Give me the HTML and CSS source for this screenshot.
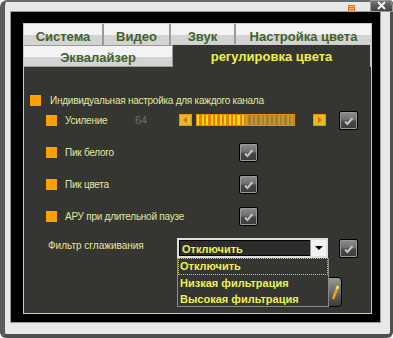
FILE: index.html
```html
<!DOCTYPE html>
<html lang="ru">
<head>
<meta charset="utf-8">
<title>регулировка цвета</title>
<link rel="stylesheet" href="styles.css">
</head>
<body>
<div class="window">
  <div class="titlebar">
    <span class="menu-icon"><svg width="7" height="7" viewBox="0 0 7 7"><rect width="7" height="7" fill="#f07010"/><rect x="1" y="1" width="5" height="1" fill="#ffc060"/><rect x="1" y="3" width="5" height="1" fill="#ffc060"/><rect x="1" y="5" width="5" height="1" fill="#ffc060"/></svg></span>
    <span class="close-btn"><svg width="23" height="12" viewBox="0 0 23 12"><path d="M8 2 L15 9 M15 2 L8 9" stroke="#f4f4f4" stroke-width="2" fill="none"/></svg></span>
  </div>
  <div class="screen">
    <div class="panel">
      <div class="tabs1">
        <div class="tab t1">Система</div>
        <div class="tab t2">Видео</div>
        <div class="tab t3">Звук</div>
        <div class="tab t4">Настройка цвета</div>
      </div>
      <div class="tabs2">
        <div class="tab eq">Эквалайзер</div>
        <div class="tab active">регулировка цвета</div>
      </div>
      <div class="content">
        <div class="row-a"><span class="sq"></span><span class="lbl">Индивидуальная настройка для каждого канала</span></div>
        <div class="row first">
          <span class="sq ind"></span><span class="lbl w70">Усиление</span><span class="val">64</span>
          <span class="arr"><svg width="11" height="10" viewBox="0 0 11 10"><path d="M3 5 L7 1.5 L7 8.5 Z" fill="#e8680c"/></svg></span>
          <span class="bar"><span class="fill"></span><span class="rest"></span></span>
          <span class="arr arr-r"><svg width="11" height="10" viewBox="0 0 11 10"><path d="M8 5 L4 1.5 L4 8.5 Z" fill="#e8680c"/></svg></span>
          <span class="chk ml13"><svg width="17" height="17" viewBox="0 0 17 17"><path d="M5 9.5 L7.5 12 L12.5 6" stroke="#c4c4c4" stroke-width="2" fill="none"/></svg></span>
        </div>
        <div class="row">
          <span class="sq ind"></span><span class="lbl w174">Пик белого</span>
          <span class="chk"><svg width="17" height="17" viewBox="0 0 17 17"><path d="M5 9.5 L7.5 12 L12.5 6" stroke="#c4c4c4" stroke-width="2" fill="none"/></svg></span>
        </div>
        <div class="row">
          <span class="sq ind"></span><span class="lbl w174">Пик цвета</span>
          <span class="chk"><svg width="17" height="17" viewBox="0 0 17 17"><path d="M5 9.5 L7.5 12 L12.5 6" stroke="#c4c4c4" stroke-width="2" fill="none"/></svg></span>
        </div>
        <div class="row">
          <span class="sq ind"></span><span class="lbl w174">АРУ при длительной паузе</span>
          <span class="chk"><svg width="17" height="17" viewBox="0 0 17 17"><path d="M5 9.5 L7.5 12 L12.5 6" stroke="#c4c4c4" stroke-width="2" fill="none"/></svg></span>
        </div>
        <div class="row filter">
          <span class="lbl flbl">Фильтр сглаживания</span>
          <div class="select-wrap">
            <div class="select"><span class="sel-text">Отключить</span><span class="sel-arrow"><svg width="14" height="14" viewBox="0 0 14 14"><path d="M3 5 L11 5 L7 9 Z" fill="#000"/></svg></span></div>
            <div class="list">
              <div class="item focus">Отключить</div>
              <div class="item">Низкая фильтрация</div>
              <div class="item">Высокая фильтрация</div>
            </div>
          </div>
          <span class="chk ml11"><svg width="17" height="17" viewBox="0 0 17 17"><path d="M5 9.5 L7.5 12 L12.5 6" stroke="#c4c4c4" stroke-width="2" fill="none"/></svg></span>
        </div>
        <div class="row-g">
          <span class="big-btn"><svg width="28" height="28" viewBox="0 0 28 28"><path d="M25 8 L20 21" stroke="#f0a020" stroke-width="2.5" fill="none"/><path d="M25 8 L24 11" stroke="#f8e060" stroke-width="2.5" fill="none"/></svg></span>
        </div>
      </div>
    </div>
  </div>
</div>
</body>
</html>
```
FILE: styles.css
```css
html, body {
  margin: 0;
  padding: 0;
  background: #ffffff;
}
body {
  width: 393px;
  height: 338px;
  overflow: hidden;
  font-family: "Liberation Sans", Arial, sans-serif;
}
.window {
  box-sizing: border-box;
  width: 393px;
  height: 338px;
  background: #e8e8e8;
  border-style: solid;
  border-color: #6a6a6a #4e4e4e #4e4e4e #5a5a5a;
  border-width: 2px 3px 4px 5px;
  border-radius: 7px 4px 6px 6px;
  padding: 0 10px 12px 6px;
  display: flex;
  flex-direction: column;
}
.titlebar {
  height: 10px;
  display: flex;
  justify-content: flex-end;
  align-items: flex-start;
}
.menu-icon {
  display: block;
  width: 7px;
  height: 7px;
  margin-top: 3px;
  margin-right: 15px;
}
.menu-icon svg, .close-btn svg, .chk svg, .arr svg, .sel-arrow svg, .big-btn svg {
  display: block;
}
.close-btn {
  display: block;
  width: 23px;
  height: 12px;
  margin-top: -2px;
  margin-right: -13px;
  background: linear-gradient(#7a7a7a, #3c3c3c);
  border-radius: 0 6px 0 3px;
  box-shadow: inset 0 0 0 1px #9a9a9a;
}
.screen {
  flex: 1;
  background: #000000;
  padding: 11px 8px 8px 12px;
  display: flex;
  box-shadow: 0 0 0 1px #9a9a9a;
}
.panel {
  flex: 1;
  border: 1px solid #c8c8c8;
  background: #353632;
  display: flex;
  flex-direction: column;
  min-width: 0;
}
.tabs1 {
  display: flex;
  gap: 2px;
  background: #9a9a9a;
  border-bottom: 1px solid #9a9a9a;
}
.tab {
  box-sizing: border-box;
  height: 21px;
  background: linear-gradient(#f3f3f3 0, #f3f3f3 11px, #d3d3d3 11px);
  color: #44622c;
  font-weight: bold;
  font-size: 13px;
  line-height: 15px;
  padding-top: 5px;
  text-align: center;
  white-space: nowrap;
}
.t1 { width: 78px; }
.t2 { width: 65px; }
.t3 { width: 63px; }
.t4 { flex: 1; }
.tabs2 {
  display: flex;
  height: 21px;
}
.eq {
  width: 149px;
  border-right: 1px solid #9a9a9a;
  border-bottom: 1px solid #9a9a9a;
  padding-top: 4px;
}
.active {
  flex: 1;
  height: 23px;
  margin-top: -2px;
  background: #353632;
  border-top: 1px solid #cccccc;
  border-right: 1px solid #cccccc;
  color: #eef050;
  padding-top: 4px;
}
.content {
  display: flex;
  flex-direction: column;
  padding: 28px 0 0 6px;
}
.row-a {
  display: flex;
  align-items: center;
  height: 11px;
  gap: 9px;
  margin-bottom: 4px;
}
.sq {
  flex: none;
  width: 11px;
  height: 11px;
  background: #ffa000;
}
.sq.ind { margin-left: 16px; }
.lbl {
  font-size: 10px;
  letter-spacing: -0.25px;
  color: #e0e6a0;
  white-space: nowrap;
}
.row {
  display: flex;
  align-items: center;
  height: 20px;
  margin-top: 12px;
}
.row.first { margin-top: 0; }
.row .lbl { margin-left: 8px; }
.w70 { width: 70px; flex: none; }
.w174 { width: 174px; flex: none; }
.val {
  width: 44px;
  flex: none;
  font-size: 11px;
  color: #6c6c6c;
}
.arr {
  flex: none;
  width: 11px;
  height: 10px;
  border: 1px solid #f08a18;
  background: #dcbe26;
}
.arr-r { margin-left: 18px; }
.bar {
  flex: none;
  width: 99px;
  height: 12px;
  box-sizing: border-box;
  margin-left: 4px;
  border: 1px solid #e88a10;
  display: flex;
}
.fill {
  width: 48px;
  background: repeating-linear-gradient(to right, #ffe000 0, #ffe000 2px, #f07a00 2px, #f07a00 4.5px);
  border-right: 1px solid #e88a10;
}
.rest {
  flex: 1;
  background: repeating-linear-gradient(to right, #c29a38 0, #c29a38 2px, #a97d2e 2px, #a97d2e 4.5px);
}
.chk {
  flex: none;
  width: 17px;
  height: 17px;
  border: 1px solid #000000;
  border-radius: 2px;
  background: linear-gradient(#8c8c8c 0, #6e6e6e 45%, #474747 55%, #3c3c3c 100%);
  box-shadow: inset 0 0 0 1px #9a9a9a;
}
.ml13 { margin-left: 13px; }
.ml11 { margin-left: 11px; }
.filter .flbl {
  margin-left: 18px;
  width: 129px;
  flex: none;
  margin-top: -5px;
  letter-spacing: 0;
}
.select-wrap {
  position: relative;
  width: 151px;
  height: 20px;
  flex: none;
}
.select {
  box-sizing: border-box;
  width: 151px;
  height: 20px;
  border: 2px solid #dedede;
  background: #2c2d2a;
  display: flex;
  align-items: stretch;
}
.sel-text {
  flex: 1;
  color: #eef050;
  font-weight: bold;
  font-size: 11px;
  line-height: 16px;
  padding-left: 2px;
  border: 1px solid #000000;
  border-right: none;
}
.sel-arrow {
  width: 15px;
  background: #f2f2f2;
  border-left: 1px solid #9a9a9a;
  display: flex;
  align-items: center;
  justify-content: center;
}
.list {
  position: absolute;
  top: 100%;
  left: 0;
  z-index: 2;
  box-sizing: border-box;
  width: 152px;
  height: 49px;
  background: #353632;
  border: 1px solid #8a8a8a;
  border-top: none;
}
.item {
  box-sizing: border-box;
  height: 16px;
  color: #eef050;
  font-weight: bold;
  font-size: 11px;
  line-height: 16px;
  padding-left: 2px;
  white-space: nowrap;
}
.item.focus {
  outline: 1px dotted #c8c070;
  outline-offset: -1px;
  height: 17px;
  line-height: 17px;
}
.row-g {
  display: flex;
  margin-top: 19px;
  padding-left: 282px;
}
.big-btn {
  display: block;
  width: 28px;
  height: 28px;
  border: 1px solid #000000;
  border-radius: 4px;
  background: linear-gradient(#9a9a9a, #3a3a3a);
}
```
